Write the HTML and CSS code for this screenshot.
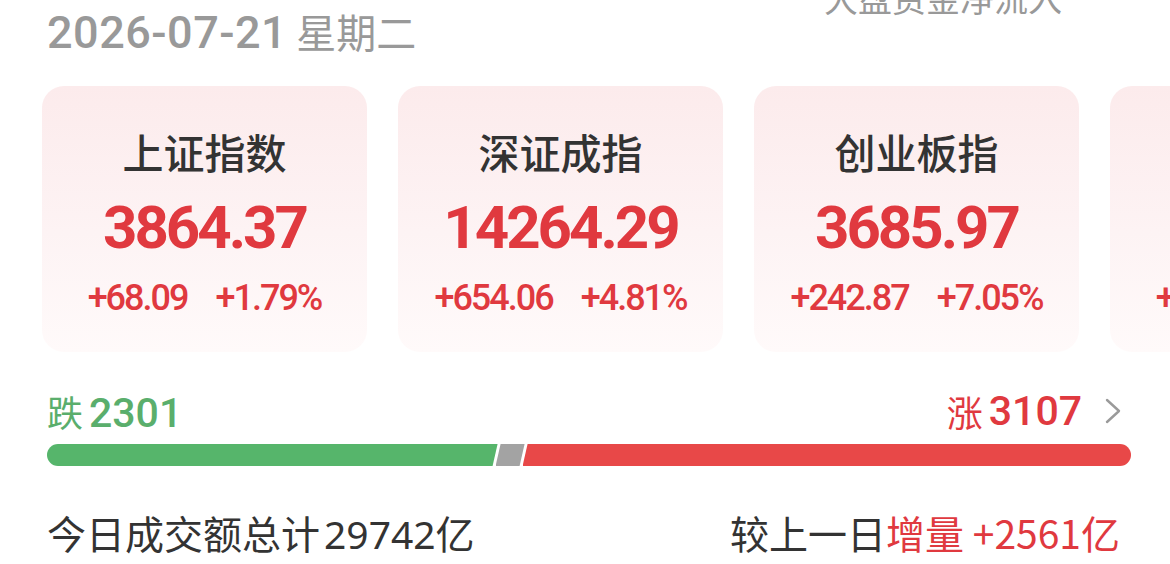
FILE: index.html
```html
<!DOCTYPE html>
<html lang="zh-CN">
<head>
    <meta charset="UTF-8">
    <meta name="viewport" content="width=device-width, initial-scale=1.0">
    <title>市场概况</title>
    <link rel="stylesheet" href="styles.css">
</head>
<body>

<div class="page">
    <div class="top">
        <div class="date"><span class="date-num">2026-07-21</span> 星期二</div>
        <div class="flow">大盘资金净流入</div>
    </div>

    <div class="cards">
        <div class="card">
            <div class="card-title">上证指数</div>
            <div class="card-value">3864.37</div>
            <div class="card-change"><span>+68.09</span><span>+1.79%</span></div>
        </div>
        <div class="card">
            <div class="card-title">深证成指</div>
            <div class="card-value">14264.29</div>
            <div class="card-change"><span>+654.06</span><span>+4.81%</span></div>
        </div>
        <div class="card">
            <div class="card-title">创业板指</div>
            <div class="card-value">3685.97</div>
            <div class="card-change"><span>+242.87</span><span>+7.05%</span></div>
        </div>
        <div class="card">
            <div class="card-title">科创综指</div>
            <div class="card-value">1365.42</div>
            <div class="card-change"><span>+58.21</span><span>+4.45%</span></div>
        </div>
    </div>

    <div class="breadth">
        <div class="fall">跌<span class="count">2301</span></div>
        <div class="rise">涨<span class="count">3107</span>
            <svg class="arrow" width="18" height="26" viewBox="0 0 18 26">
                <path d="M3 2 L15 13 L3 24" fill="none" stroke="#9a9a9a" stroke-width="2.4" stroke-linecap="round" stroke-linejoin="round"/>
            </svg>
        </div>
    </div>

    <div class="bar">
        <div class="seg seg-down" style="flex-grow: 2301"></div>
        <div class="seg seg-flat"></div>
        <div class="seg seg-up" style="flex-grow: 3107"></div>
    </div>

    <div class="volume">
        <div>今日成交额总计<span class="vol-num">29742</span>亿</div>
        <div>较上一日<span class="red">增量 +2561亿</span></div>
    </div>
</div>

</body>
</html>
```

FILE: styles.css
```css
body {
    margin: 0;
    background-color: #ffffff;
    font-family: "Noto Sans CJK SC", "Noto Sans", sans-serif;
    color: #333333;
    overflow: hidden;
}

.page {
    padding: 0 39px 0 47px;
}

.top {
    display: flex;
    justify-content: space-between;
    align-items: flex-start;
    height: 86px;
}

.date {
    font-size: 40px;
    line-height: 62px;
    color: #999999;
}

.date-num {
    font-family: Roboto, sans-serif;
    font-size: 45px;
    font-weight: 500;
    letter-spacing: 0.5px;
}

.flow {
    font-size: 34px;
    line-height: 40px;
    margin-top: -22px;
    margin-right: 69px;
    color: #999999;
}

.cards {
    display: flex;
    gap: 31px;
    margin-left: -5px;
}

.card {
    flex: 0 0 325px;
    height: 266px;
    padding-top: 40px;
    box-sizing: border-box;
    border-radius: 22px;
    background: linear-gradient(#fcebec, #fdf3f4 55%, #fffafa);
    text-align: center;
}

.card-title {
    font-size: 41px;
    font-weight: 500;
    line-height: 50px;
    color: #333333;
}

.card-value {
    margin-top: 20px;
    font-family: Roboto, sans-serif;
    font-size: 60px;
    font-weight: 700;
    line-height: 64px;
    letter-spacing: -3px;
    color: #e0393f;
}

.card-change {
    margin-top: 18px;
    display: flex;
    justify-content: center;
    gap: 28px;
    font-family: Roboto, sans-serif;
    font-size: 36px;
    font-weight: 500;
    line-height: 40px;
    letter-spacing: -2px;
    color: #e0393f;
}

.breadth {
    margin-top: 37px;
    display: flex;
    justify-content: space-between;
    align-items: center;
    height: 44px;
    font-size: 36px;
}

.fall {
    color: #5aae6c;
}

.rise {
    display: flex;
    align-items: center;
    color: #e0393f;
}

.count {
    margin-left: 6px;
    font-family: Roboto, sans-serif;
    font-size: 41px;
    font-weight: 500;
}

.arrow {
    margin-left: 22px;
    margin-right: 9px;
}

.bar {
    margin-top: 11px;
    display: flex;
    height: 22px;
    border-radius: 11px;
    overflow: hidden;
}

.seg {
    flex-basis: 0;
    height: 100%;
}

.seg + .seg {
    margin-left: -2px;
}

.seg-down {
    background-color: #56b56b;
    clip-path: polygon(0 0, 100% 0, calc(100% - 5px) 100%, 0 100%);
}

.seg-flat {
    flex: 0 0 29px;
    background-color: #a3a3a3;
    clip-path: polygon(5px 0, 100% 0, calc(100% - 5px) 100%, 0 100%);
}

.seg-up {
    background-color: #e84848;
    clip-path: polygon(5px 0, 100% 0, 100% 100%, 0 100%);
}

.volume {
    margin-top: 44px;
    padding-right: 11px;
    display: flex;
    justify-content: space-between;
    font-size: 39px;
    line-height: 44px;
    color: #333333;
}

.vol-num {
    margin-left: 4px;
    font-family: "Noto Sans", sans-serif;
}

.red {
    color: #e0393f;
}
```
